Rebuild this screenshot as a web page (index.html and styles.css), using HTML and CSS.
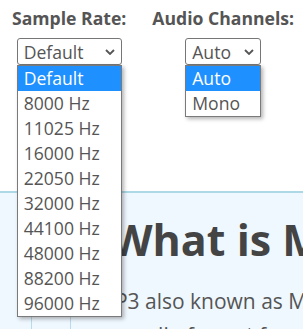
FILE: index.html
```html
<!DOCTYPE html>
<html lang="en">
<head>
  <meta charset="UTF-8" />
  <meta name="viewport" content="width=device-width, initial-scale=1.0" />
  <title>MP3 Converter</title>
  <link rel="stylesheet" href="styles.css">
</head>
<body>
  <div class="tool">
    <div class="field">
      <label class="field-label">Sample Rate:</label>
      <div class="picker picker-rate">
        <div class="picker-box">
          <span>Default</span>
          <svg class="chevron" width="10" height="6" viewBox="0 0 10 6"><path d="M1 1l4 4 4-4" fill="none" stroke="#555" stroke-width="1.8"/></svg>
        </div>
        <ul class="picker-menu">
          <li class="active">Default</li>
          <li>8000 Hz</li>
          <li>11025 Hz</li>
          <li>16000 Hz</li>
          <li>22050 Hz</li>
          <li>32000 Hz</li>
          <li>44100 Hz</li>
          <li>48000 Hz</li>
          <li>88200 Hz</li>
          <li>96000 Hz</li>
        </ul>
      </div>
    </div>
    <div class="field">
      <label class="field-label">Audio Channels:</label>
      <div class="picker picker-channels">
        <div class="picker-box">
          <span>Auto</span>
          <svg class="chevron" width="10" height="6" viewBox="0 0 10 6"><path d="M1 1l4 4 4-4" fill="none" stroke="#555" stroke-width="1.8"/></svg>
        </div>
        <ul class="picker-menu">
          <li class="active">Auto</li>
          <li>Mono</li>
        </ul>
      </div>
    </div>
  </div>

  <section class="article">
    <div class="article-rail"></div>
    <div class="article-body">
      <h1 class="article-title">What is MP3</h1>
      <p class="article-text">MP3 also known as MPEG-1 Audio Layer III is an audio format for storing music and sound.</p>
    </div>
  </section>
</body>
</html>
```

FILE: styles.css
```css
* {
  margin: 0;
  padding: 0;
  box-sizing: border-box;
}
html, body {
  overflow: hidden;
}
body {
  font-family: 'Open Sans', sans-serif;
  color: #555;
  background: #fff;
}
.tool {
  display: flex;
  gap: 26px;
  height: 191px;
  padding: 6px 0 0 12px;
  position: relative;
  z-index: 5;
}
.field {
  display: flex;
  flex-direction: column;
  align-items: center;
}
.field-label {
  font-size: 17.6px;
  font-weight: 700;
  color: #555;
  line-height: 24px;
  white-space: nowrap;
}
.picker {
  position: relative;
  margin-top: 8px;
}
.picker-rate {
  width: 105px;
}
.picker-channels {
  width: 76px;
}
.picker-box {
  height: 27px;
  border: 1px solid #767676;
  border-radius: 3px;
  display: flex;
  align-items: center;
  justify-content: space-between;
  padding: 0 6px 0 6px;
  font-size: 17.6px;
  color: #555;
  background: #fff;
}
.chevron {
  display: block;
}
.picker-menu {
  position: absolute;
  top: 100%;
  left: 0;
  width: 100%;
  list-style: none;
  background: #fff;
  border: 1px solid #7a7a7a;
  box-shadow: 2px 2px 4px rgba(0, 0, 0, 0.3);
}
.picker-menu li {
  font-size: 17.6px;
  line-height: 25px;
  padding-left: 6px;
  color: #555;
  white-space: nowrap;
}
.picker-menu li.active {
  background: #1e90ff;
  color: #fff;
}
.article {
  display: flex;
  border-top: 2px solid #add8e6;
  background: #f0f8ff;
  min-height: 200px;
}
.article-rail {
  flex: none;
  width: 40px;
  margin-left: 31px;
  border-left: 1px solid #b8dcea;
  border-right: 1px solid #b8dcea;
}
.article-body {
  flex: none;
  width: 460px;
  padding-left: 25px;
}
.article-title {
  font-size: 43px;
  font-weight: 700;
  color: #444;
  line-height: 57px;
  margin-top: 18px;
  padding-left: 15px;
}
.article-text {
  font-size: 21px;
  line-height: 34px;
  margin-top: 16px;
  color: #555;
}
```
